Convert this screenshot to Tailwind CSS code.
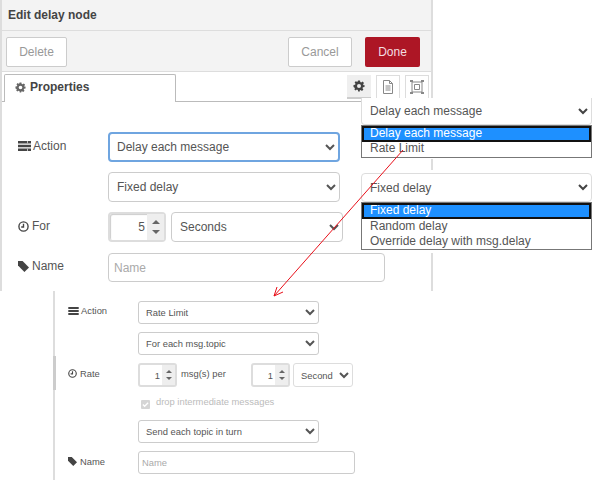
<!DOCTYPE html>
<html lang="en">
<head>
  <meta charset="UTF-8" />
  <title>Edit delay node</title>
  <script src="https://cdn.jsdelivr.net/npm/@tailwindcss/browser@4"></script>
</head>
<body class="bg-white overflow-hidden font-['Liberation_Sans',Arial,sans-serif]">
  <div class="relative w-[595px] h-[480px] overflow-hidden">

    <!-- top window: edit dialog -->
    <div class="absolute left-0 top-0 w-[433px] h-[291px] border-l-2 border-r-2 border-[#dddddd] bg-white">
      <div class="h-[31px] bg-[#f3f3f3] border-b border-[#dddddd] pl-[6px] flex items-center text-[12px] font-bold text-[#444444]">Edit delay node</div>
      <div class="h-[41px] bg-[#f3f3f3] border-b border-[#dddddd] pl-[4px] pr-[11px] pt-[6px] flex items-start text-[12px]">
        <div class="w-[61px] h-[30px] bg-white border border-[#cccccc] rounded-[2px] flex items-center justify-center text-[#999999]">Delete</div>
        <div class="ml-auto w-[64px] h-[30px] bg-white border border-[#cccccc] rounded-[2px] flex items-center justify-center text-[#999999]">Cancel</div>
        <div class="ml-[13px] w-[55px] h-[30px] bg-[#ad1625] rounded-[2px] flex items-center justify-center text-[#f3dfe0]">Done</div>
      </div>
      <div class="h-[30px] border-b border-[#bbbbbb] flex items-end pl-[2px] pr-[2px]">
        <div class="w-[172px] h-[28px] -mb-px bg-white border border-b-0 border-[#bbbbbb] rounded-t-[2px] pl-[10px] pb-[3px] flex items-center gap-[4px] text-[12px] font-bold text-[#444444]">
          <svg class="w-[11px] h-[11px]" viewBox="0 0 24 24" fill="#666666"><path fill-rule="evenodd" d="M10 1h4l.6 3.2 1.900.8 2.700-1.800 2.800 2.800-1.800 2.700.8 1.900L23 10v4l-3.200.6-.8 1.900 1.800 2.700-2.800 2.800-2.700-1.800-1.900.8L13.700 23h-3.400l-.6-3.200-1.900-.8-2.700 1.800-2.800-2.800L4 17.300l-.8-1.900L1 14v-4l3.200-.6.8-1.900-1.800-2.700 2.800-2.800L7.700 3.800 9.400 3zM12 8a4 4 0 1 0 0 8 4 4 0 0 0 0-8z"/></svg>
          Properties
        </div>
        <div class="ml-auto flex gap-[5px] self-start mt-[3px]">
          <div class="w-[24px] h-[24px] bg-[#efefef] border-b-2 border-[#cccccc] flex items-center justify-center">
            <svg class="w-[12px] h-[12px]" viewBox="0 0 24 24" fill="#444444"><path fill-rule="evenodd" d="M10 1h4l.6 3.2 1.900.8 2.700-1.800 2.800 2.800-1.800 2.700.8 1.900L23 10v4l-3.200.6-.8 1.900 1.800 2.700-2.800 2.800-2.700-1.800-1.900.8L13.700 23h-3.400l-.6-3.200-1.900-.8-2.700 1.800-2.800-2.800L4 17.300l-.8-1.900L1 14v-4l3.200-.6.8-1.900-1.800-2.700 2.800-2.800L7.700 3.800 9.400 3zM12 8a4 4 0 1 0 0 8 4 4 0 0 0 0-8z"/></svg>
          </div>
          <div class="w-[24px] h-[24px] border border-[#dddddd] flex items-center justify-center">
            <svg class="w-[12px] h-[14px]" viewBox="0 0 12 14" fill="none" stroke="#888888"><path d="M1.500.500h6l3 3v10h-9zM7.500.500v3h3M3.500 6h5M3.500 8h5M3.500 10h5"/></svg>
          </div>
          <div class="w-[24px] h-[24px] border border-[#dddddd] flex items-center justify-center">
            <svg class="w-[14px] h-[14px]" viewBox="0 0 14 14" fill="none" stroke="#888888"><path d="M2 2h10v10h-10zM4.500 4.500h5v5h-5z"/><path stroke-width="2" d="M0 1h3M0 13h3M11 1h3M11 13h3"/></svg>
          </div>
        </div>
      </div>

      <div class="pl-[16px] pr-[46px] pt-[30px] text-[12px] text-[#555555]">
        <div class="flex items-center h-[30px]">
          <label class="w-[90px] flex items-center gap-[2px] -mt-[2px]">
            <svg class="w-[13px] h-[10px]" viewBox="0 0 13 10" fill="#444444"><path d="M0 0h13v2.500h-13zM0 3.700h13v2.500h-13zM0 7.400h13v2.600h-13z"/><path fill="#bbb" d="M9 0h1v2.500H9zM9 7.400h1V10H9z"/></svg>
            Action
          </label>
          <select class="w-[232px] h-[30px] pl-[3px] pb-[1px] bg-white border-2 border-[#6fa5e0] rounded-[4px]"><option>Delay each message</option></select>
        </div>
        <div class="flex items-center h-[30px] mt-[10px]">
          <select class="ml-[90px] w-[232px] h-[30px] pl-[4px] pb-[1px] bg-white border border-[#cccccc] rounded-[4px]"><option>Fixed delay</option></select>
        </div>
        <div class="flex items-center h-[30px] mt-[10px]">
          <label class="w-[90px] flex items-center gap-[3px] -mt-[2px]">
            <svg class="w-[11px] h-[11px]" viewBox="0 0 12 12" fill="none" stroke="#444444" stroke-width="1.500"><circle cx="6" cy="6" r="5"/><path d="M6 3v3.500H3.500"/></svg>
            For
          </label>
          <div class="w-[58px] h-[30px] flex border-2 border-[#dddddd] rounded-[4px] shadow-[inset_1px_1px_1px_#cccccc]">
            <div class="flex-1 text-right pr-[2px] leading-[27px]">5</div>
            <div class="w-[17px] bg-[#eeeeee] flex flex-col items-center justify-around py-[3px]">
              <div class="w-0 h-0 border-x-[4px] border-x-transparent border-b-[4px] border-b-[#666666]"></div>
              <div class="w-0 h-0 border-x-[4px] border-x-transparent border-t-[4px] border-t-[#666666]"></div>
            </div>
          </div>
          <select class="ml-[5px] w-[172px] h-[30px] pl-[4px] bg-white border border-[#cccccc] rounded-[4px]"><option>Seconds</option></select>
        </div>
        <div class="flex items-center h-[29px] mt-[11px]">
          <label class="w-[90px] flex items-center gap-[3px] -mt-[3px]">
            <svg class="w-[11px] h-[11px]" viewBox="0 0 12 12" fill="#444444"><path d="M0 0h5l7 7-5 5-7-7z"/></svg>
            Name
          </label>
          <input type="text" placeholder="Name" class="shrink-0 w-[277px] h-[29px] px-[5px] bg-white border border-[#cccccc] rounded-[4px] placeholder:text-[#aaaaaa]" />
        </div>
      </div>
    </div>

    <!-- dropdown crops pasted on the right -->
    <div class="absolute left-[361px] top-[98px] w-[231px] h-[61px] bg-white text-[12px] text-[#555555]">
      <div class="h-[27px] flex items-center justify-between pl-[8px] pr-[3px] bg-white border-x border-b border-[#dddddd] rounded-b-[4px]">
        Delay each message
        <svg class="w-[10px] h-[7px]" viewBox="0 0 10 7" fill="none" stroke="#444444" stroke-width="2"><path d="M1 1l4 4 4-4"/></svg>
      </div>
      <div class="border border-[#777777]">
        <div class="h-[16px] bg-[#1e90ff] border-2 border-[#111111] text-white pl-[6px] leading-[11px]">Delay each message</div>
        <div class="h-[15px] pl-[8px] leading-[13px]">Rate Limit</div>
      </div>
    </div>
    <div class="absolute left-[361px] top-[170px] w-[231px] h-[83px] pt-[3px] bg-white text-[12px] text-[#555555]">
      <div class="h-[29px] flex items-center justify-between pl-[8px] pr-[3px] bg-white border border-[#dddddd] rounded-[4px]">
        Fixed delay
        <svg class="w-[10px] h-[7px]" viewBox="0 0 10 7" fill="none" stroke="#444444" stroke-width="2"><path d="M1 1l4 4 4-4"/></svg>
      </div>
      <div class="border border-[#777777]">
        <div class="h-[16px] bg-[#1e90ff] border-2 border-[#111111] text-white pl-[6px] leading-[11px]">Fixed delay</div>
        <div class="h-[15px] pl-[8px] leading-[14px]">Random delay</div>
        <div class="h-[15px] pl-[8px] leading-[14px]">Override delay with msg.delay</div>
      </div>
    </div>

    <!-- bottom window: rate limit options -->
    <div class="absolute left-[53px] top-[291px] w-[320px] h-[189px] border-l-2 border-[#dddddd] bg-white pl-[13px] pt-[10px] text-[9.4px] text-[#555555]">
      <div class="absolute -left-[2px] top-[65px] w-[3px] h-[34px] bg-[#cccccc]"></div>
      <div class="flex items-center h-[23px]">
        <label class="w-[70px] flex items-center gap-[2px] -mt-[2px]">
          <svg class="w-[11px] h-[8px]" viewBox="0 0 13 10" fill="#444444"><path d="M0 0h13v2.500h-13zM0 3.700h13v2.500h-13zM0 7.400h13v2.600h-13z"/></svg>
          Action
        </label>
        <select class="w-[181px] h-[23px] pl-[3px] bg-white border border-[#cccccc] rounded-[3px]"><option>Rate Limit</option></select>
      </div>
      <div class="flex items-center h-[23px] mt-[8px]">
        <select class="ml-[70px] w-[181px] h-[23px] pl-[3px] bg-white border border-[#cccccc] rounded-[3px]"><option>For each msg.topic</option></select>
      </div>
      <div class="flex items-center h-[24px] mt-[8px]">
        <label class="w-[70px] flex items-center gap-[3px] -mt-[2px]">
          <svg class="w-[9px] h-[9px]" viewBox="0 0 12 12" fill="none" stroke="#444444" stroke-width="1.500"><circle cx="6" cy="6" r="5"/><path d="M6 3v3.500H3.500"/></svg>
          Rate
        </label>
        <div class="w-[39px] h-[24px] flex border-2 border-[#dddddd] rounded-[3px]">
          <div class="flex-1 text-right pr-[2px] leading-[21px]">1</div>
          <div class="w-[13px] bg-[#eeeeee] flex flex-col items-center justify-around py-[3px]">
            <div class="w-0 h-0 border-x-[3px] border-x-transparent border-b-[3px] border-b-[#666666]"></div>
            <div class="w-0 h-0 border-x-[3px] border-x-transparent border-t-[3px] border-t-[#666666]"></div>
          </div>
        </div>
        <span class="ml-[4px] w-[70px] -mt-[2px]">msg(s) per</span>
        <div class="w-[39px] h-[24px] flex border-2 border-[#dddddd] rounded-[3px]">
          <div class="flex-1 text-right pr-[2px] leading-[21px]">1</div>
          <div class="w-[13px] bg-[#eeeeee] flex flex-col items-center justify-around py-[3px]">
            <div class="w-0 h-0 border-x-[3px] border-x-transparent border-b-[3px] border-b-[#666666]"></div>
            <div class="w-0 h-0 border-x-[3px] border-x-transparent border-t-[3px] border-t-[#666666]"></div>
          </div>
        </div>
        <select class="ml-[3px] w-[60px] h-[24px] pl-[3px] bg-white border border-[#dddddd] rounded-[3px]"><option>Second</option></select>
      </div>
      <div class="flex items-center h-[14px] mt-[10px] ml-[73px] gap-[6px] text-[#bbbbbb]">
        <div class="w-[9px] h-[9px] bg-[#d5d5d5] rounded-[1px] flex items-center justify-center">
          <svg class="w-[7px] h-[7px]" viewBox="0 0 8 8" fill="none" stroke="#ffffff" stroke-width="1.500"><path d="M1 4l2 2 4-4"/></svg>
        </div>
        <span class="-mt-[3px]">drop intermediate messages</span>
      </div>
      <div class="flex items-center h-[23px] mt-[9px]">
        <select class="ml-[70px] w-[181px] h-[23px] pl-[3px] bg-white border border-[#cccccc] rounded-[3px]"><option>Send each topic in turn</option></select>
      </div>
      <div class="flex items-center h-[23px] mt-[8px]">
        <label class="w-[70px] flex items-center gap-[3px] -mt-[1px]">
          <svg class="w-[9px] h-[9px]" viewBox="0 0 12 12" fill="#444444"><path d="M0 0h5l7 7-5 5-7-7z"/></svg>
          Name
        </label>
        <input type="text" placeholder="Name" class="w-[217px] h-[23px] px-[3px] bg-white border border-[#cccccc] rounded-[3px] placeholder:text-[#aaaaaa]" />
      </div>
    </div>

    <!-- red arrow joining the two crops -->
    <svg class="absolute inset-0 pointer-events-none" width="595" height="480" fill="none" stroke="#e8101a">
      <path d="M403 150L274 296"/>
      <path d="M274 296l3-9M274 296l9-4"/>
    </svg>
  </div>
</body>
</html>
